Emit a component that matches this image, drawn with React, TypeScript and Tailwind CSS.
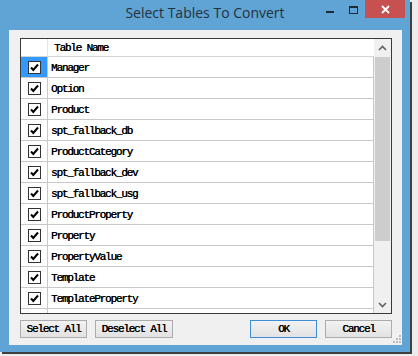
import React from 'react';

const tables = [
  'Manager',
  'Option',
  'Product',
  'spt_fallback_db',
  'ProductCategory',
  'spt_fallback_dev',
  'spt_fallback_usg',
  'ProductProperty',
  'Property',
  'PropertyValue',
  'Template',
  'TemplateProperty',
  'TemplateValue',
];

const mono =
  "font-['SimSun','Liberation_Mono',monospace] text-[11px] tracking-[-1.2px] text-black whitespace-nowrap [text-shadow:0.35px_0_0_#000]";

const CheckBox: React.FC = () => (
  <div className="w-[13px] h-[13px] border border-[#333] bg-white flex items-center justify-center">
    <svg width="11" height="11" viewBox="0 0 11 11">
      <path d="M2 5.5 L4.3 8 L9 2.5" fill="none" stroke="#000" strokeWidth="2" />
    </svg>
  </div>
);

const Button: React.FC<{ label: string; w: string; focus?: boolean }> = ({ label, w, focus }) => (
  <div
    className={`${w} h-[18px] flex items-center justify-center bg-gradient-to-b from-[#f2f2f2] to-[#e2e2e2] border ${
      focus ? 'border-[#3c8fd6]' : 'border-[#acacac]'
    }`}
  >
    <span className={mono}>{label}</span>
  </div>
);

export default function App() {
  return (
    <div className="w-[418px] h-[356px] bg-[#ececec] overflow-hidden">
      <div className="w-[410px] h-[352px] bg-[#5fa4d4] flex flex-col shadow-[2px_2px_0_#3f3f3f]">
        {/* Title bar */}
        <div className="h-[30px] relative flex">
          <div className="absolute inset-x-0 top-[1px] text-center font-['Open_Sans',sans-serif] text-[14px] text-[#25303b] leading-[24px]">
            Select Tables To Convert
          </div>
          <div className="ml-auto flex items-start h-[18px] mr-[5px] relative">
            <div className="w-[22px] h-[18px] flex items-center justify-center pt-[6px]">
              <div className="w-[8px] h-[2px] bg-[#1f2a36]" />
            </div>
            <div className="w-[24px] h-[18px] flex items-start justify-center pt-[6px]">
              <div className="w-[9px] h-[8px] border border-[#1f2a36] border-t-[2px]" />
            </div>
            <div className="w-[40px] h-[18px] bg-[#c75050] flex items-center justify-center">
              <svg width="9" height="9" viewBox="0 0 9 9">
                <path d="M1 1 L8 8 M8 1 L1 8" stroke="#fff" strokeWidth="1.8" />
              </svg>
            </div>
          </div>
        </div>

        {/* Client area */}
        <div className="ml-[9px] mr-[8px] h-[315px] bg-[#f0f0f0] pt-[8px] pl-[11px] pr-[10px] relative">
          {/* Grid */}
          <div className="h-[276px] border border-[#3a3a3a] bg-white flex overflow-hidden">
            <div className="flex-1 flex flex-col">
              <div className="h-[18px] flex shrink-0 border-b border-[#d5d5d5]">
                <div className="w-[27px] border-r border-[#e3e3e3]" />
                <div className={`pl-[6px] pt-[2px] flex items-center ${mono}`}>Table Name</div>
              </div>
              {tables.map((t, i) => (
                <div key={t} className="h-[21px] shrink-0 flex border-b border-[#c8c8c8]">
                  <div
                    className={`w-[27px] shrink-0 border-r border-[#c8c8c8] flex items-center justify-center ${
                      i === 0 ? 'bg-[#3399ff]' : ''
                    }`}
                  >
                    <CheckBox />
                  </div>
                  <div className={`flex-1 pl-[3px] pt-[2px] flex items-center border-r border-[#c8c8c8] ${mono}`}>{t}</div>
                </div>
              ))}
            </div>
            {/* Scrollbar */}
            <div className="w-[17px] shrink-0 bg-[#f0f0f0] flex flex-col">
              <div className="h-[18px] flex items-center justify-center">
                <svg width="9" height="6" viewBox="0 0 9 6">
                  <path d="M1 5 L4.5 1.5 L8 5" fill="none" stroke="#606060" strokeWidth="1.6" />
                </svg>
              </div>
              <div className="mx-[1px] h-[184px] bg-[#cdcdcd]" />
              <div className="flex-1" />
              <div className="h-[17px] flex items-center justify-center">
                <svg width="9" height="6" viewBox="0 0 9 6">
                  <path d="M1 1 L4.5 4.5 L8 1" fill="none" stroke="#606060" strokeWidth="1.6" />
                </svg>
              </div>
            </div>
          </div>

          {/* Buttons */}
          <div className="mt-[6px] flex">
            <Button label="Select All" w="w-[67px]" />
            <div className="ml-[8px]">
              <Button label="Deselect All" w="w-[78px]" />
            </div>
            <div className="ml-auto flex gap-[8px]">
              <Button label="OK" w="w-[67px]" focus />
              <Button label="Cancel" w="w-[67px]" />
            </div>
          </div>

          {/* Resize grip */}
          <svg className="absolute right-[1px] bottom-[2px]" width="8" height="8" viewBox="0 0 8 8">
            <rect x="6" y="0" width="2" height="2" fill="#bdbdbd" />
            <rect x="3" y="3" width="2" height="2" fill="#bdbdbd" />
            <rect x="6" y="3" width="2" height="2" fill="#bdbdbd" />
            <rect x="0" y="6" width="2" height="2" fill="#bdbdbd" />
            <rect x="3" y="6" width="2" height="2" fill="#bdbdbd" />
            <rect x="6" y="6" width="2" height="2" fill="#bdbdbd" />
          </svg>
        </div>
      </div>
    </div>
  );
}
